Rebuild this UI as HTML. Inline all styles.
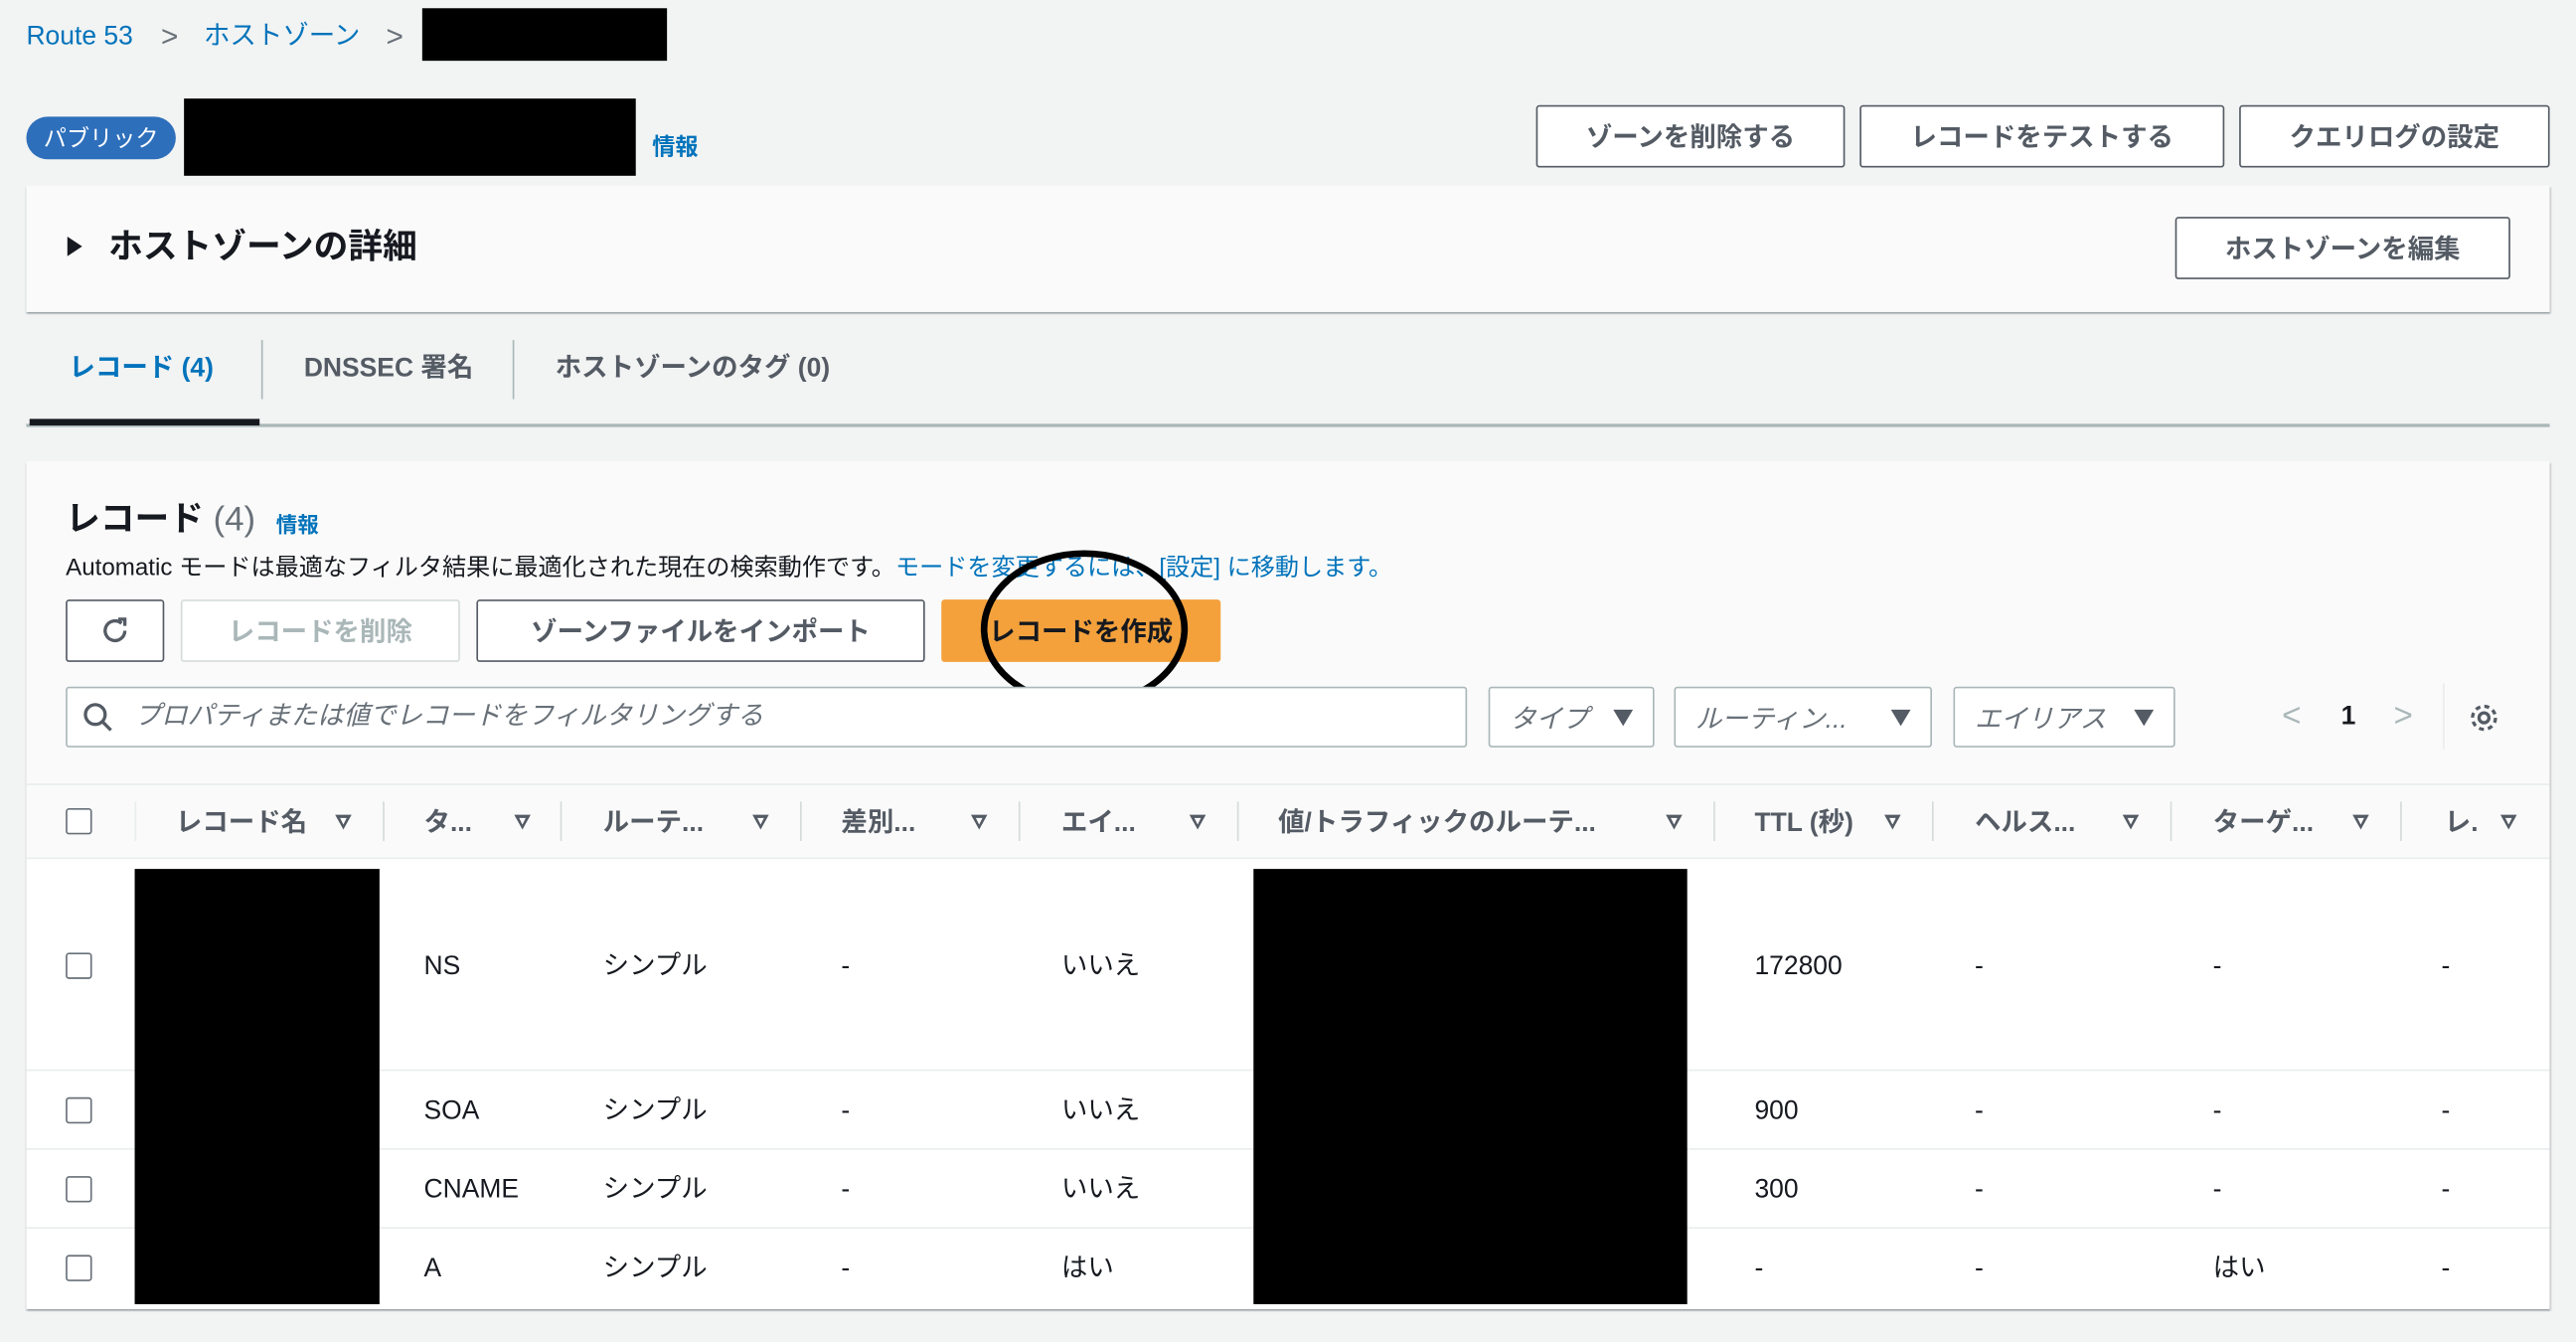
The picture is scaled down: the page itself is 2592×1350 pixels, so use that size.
<!DOCTYPE html>
<html><head><meta charset="utf-8"><style>
html,body{margin:0;padding:0;width:2592px;height:1350px;overflow:hidden;background:#f2f3f3}
#w{position:absolute;left:0;top:0;width:1568px;height:817px;transform:scale(1.65306,1.6524);transform-origin:0 0;font-family:"Liberation Sans","Noto Sans CJK JP",sans-serif;color:#16191f;line-height:24px}
.a{position:absolute;white-space:nowrap}
.blk{position:absolute;background:#000}
.btn{position:absolute;box-sizing:border-box;border:1px solid #545b64;border-radius:2px;background:#fff;color:#545b64;font-weight:bold;font-size:16px;display:flex;align-items:center;justify-content:center;padding-top:3px}
.blue{color:#0073bb}
.sep{position:absolute;width:1px;background:#d5dbdb}
.hd{position:absolute;top:490px;font-size:16px;font-weight:bold;color:#545b64;white-space:nowrap}
.tri{position:absolute;top:496px;width:0;height:0;border-left:5px solid transparent;border-right:5px solid transparent;border-top:9px solid #545b64}
.tri:after{content:"";position:absolute;left:-2px;top:-7px;border-left:2px solid transparent;border-right:2px solid transparent;border-top:4px solid #fff}
.cb{position:absolute;left:40px;width:14px;height:14px;border:1px solid #687078;border-radius:2px;background:#fff}
.c{position:absolute;font-size:16px;white-space:nowrap;line-height:24px}
.rl{position:absolute;left:16px;width:1536px;height:1px;background:#eaeded}
.dd{position:absolute;top:418px;height:37px;box-sizing:border-box;border:1px solid #aab7b8;border-radius:2px;background:#fff;font-style:italic;color:#687078;font-size:16px;padding:2px 12px 0;line-height:35px}
.dd i{position:absolute;right:12px;top:13px;border-left:6px solid transparent;border-right:6px solid transparent;border-top:10px solid #545b64}
</style></head><body><div id="w">
<div class="a blue" style="left:16px;top:11px;font-size:16px">Route 53</div>
<div class="a" style="left:98px;top:10px;font-size:18px;color:#687078">&gt;</div>
<div class="a blue" style="left:124px;top:11px;font-size:16px">ホストゾーン</div>
<div class="a" style="left:235px;top:10px;font-size:18px;color:#687078">&gt;</div>
<div class="blk" style="left:257px;top:5px;width:149px;height:32px"></div>
<div class="a" style="left:16px;top:71px;width:91px;height:26px;border-radius:13px;background:#2e6fbb;color:#fff;font-size:14px;text-align:center;line-height:27px">パブリック</div>
<div class="blk" style="left:112px;top:60px;width:275px;height:47px"></div>
<div class="a blue" style="left:397px;top:77px;font-size:14px;font-weight:bold">情報</div>
<div class="btn" style="left:935px;top:64px;width:188px;height:38px">ゾーンを削除する</div>
<div class="btn" style="left:1132px;top:64px;width:222px;height:38px">レコードをテストする</div>
<div class="btn" style="left:1363px;top:64px;width:189px;height:38px">クエリログの設定</div>
<div class="a" style="left:16px;top:113px;width:1536px;height:77px;background:#fafafa;box-shadow:0 1px 1px rgba(0,28,36,.3),1px 1px 1px rgba(0,28,36,.15)"></div>
<div class="a" style="left:41px;top:144px;border-top:6px solid transparent;border-bottom:6px solid transparent;border-left:9px solid #16191f"></div>
<div class="a" style="left:66px;top:135px;font-size:21px;font-weight:bold;line-height:32px">ホストゾーンの詳細</div>
<div class="btn" style="left:1324px;top:132px;width:204px;height:38px">ホストゾーンを編集</div>
<div class="a blue" style="left:42px;top:213px;font-size:16px;font-weight:bold">レコード (4)</div>
<div class="sep" style="left:159px;top:207px;height:36px;background:#aab7b8"></div>
<div class="a" style="left:185px;top:213px;font-size:16px;font-weight:bold;color:#545b64">DNSSEC 署名</div>
<div class="sep" style="left:312px;top:207px;height:36px;background:#aab7b8"></div>
<div class="a" style="left:338px;top:213px;font-size:16px;font-weight:bold;color:#545b64">ホストゾーンのタグ (0)</div>
<div class="a" style="left:16px;top:258px;width:1536px;height:2px;background:#aab7b8"></div>
<div class="a" style="left:18px;top:255px;width:140px;height:4px;background:#16191f"></div>
<div class="a" style="left:16px;top:281px;width:1536px;height:516px;background:#fff;box-shadow:0 1px 1px rgba(0,28,36,.3),1px 1px 1px rgba(0,28,36,.15)"></div>
<div class="a" style="left:16px;top:281px;width:1536px;height:242px;background:#fafafa"></div>
<div class="a" style="left:40px;top:301px;font-size:21px;font-weight:bold;line-height:32px">レコード <span style="font-weight:normal;color:#687078">(4)</span></div>
<div class="a blue" style="left:168px;top:308px;font-size:13px;font-weight:bold">情報</div>
<div class="a" style="left:40px;top:334px;font-size:14.6px;color:#16191f">Automatic モードは最適なフィルタ結果に最適化された現在の検索動作です。<span class="blue">モードを変更するには、[設定] に移動します。</span></div>
<div class="btn" style="left:40px;top:365px;width:60px;height:38px;padding-top:0"><svg width="22" height="22" viewBox="0 0 22 22"><path d="M17 11a6 6 0 1 1-2-4.5" fill="none" stroke="#545b64" stroke-width="2"/><path d="M13 4h4v4" fill="none" stroke="#545b64" stroke-width="2"/></svg></div>
<div class="btn" style="left:110px;top:365px;width:170px;height:38px;border-color:#d5dbdb;color:#aab7b8">レコードを削除</div>
<div class="btn" style="left:290px;top:365px;width:273px;height:38px">ゾーンファイルをインポート</div>
<div class="btn" style="left:573px;top:365px;width:170px;height:38px;background:#f4a13c;border-color:#f4a13c;color:#16191f">レコードを作成</div>
<svg class="a" style="left:590px;top:330px" width="140" height="106"><ellipse cx="70" cy="53" rx="61" ry="46" fill="none" stroke="#000" stroke-width="4"/></svg>
<div class="a" style="left:40px;top:418px;width:853px;height:37px;box-sizing:border-box;border:1px solid #aab7b8;border-radius:2px;background:#fff"></div>
<svg class="a" style="left:50px;top:427px" width="20" height="20"><circle cx="8" cy="8" r="6" fill="none" stroke="#545b64" stroke-width="2"/><path d="M12.5 12.5l5 5" stroke="#545b64" stroke-width="2"/></svg>
<div class="a" style="left:82px;top:425px;font-size:16px;font-style:italic;color:#687078">プロパティまたは値でレコードをフィルタリングする</div>
<div class="dd" style="left:906px;width:101px">タイプ<i></i></div>
<div class="dd" style="left:1019px;width:157px">ルーティン...<i></i></div>
<div class="dd" style="left:1189px;width:135px">エイリアス<i></i></div>
<div class="a" style="left:1389px;top:424px;font-size:20px;color:#aab7b8">&lt;</div>
<div class="a" style="left:1425px;top:425px;font-size:16px;font-weight:bold">1</div>
<div class="a" style="left:1457px;top:424px;font-size:20px;color:#aab7b8">&gt;</div>
<div class="sep" style="left:1487px;top:416px;height:40px;background:#eaeded"></div>
<svg class="a" style="left:1502px;top:427px" width="20" height="20" viewBox="0 0 20 20"><circle cx="10" cy="10" r="3" fill="none" stroke="#545b64" stroke-width="2"/><circle cx="10" cy="10" r="7" fill="none" stroke="#545b64" stroke-width="2" stroke-dasharray="3 2.5"/></svg>
<div class="rl" style="top:477px"></div>
<div class="rl" style="top:522px;background:#eaeded"></div>
<div class="cb" style="top:492px"></div>
<div class="sep" style="left:82px;top:488px;height:24px;background:#eaeded"></div>
<div class="hd" style="left:107px">レコード名</div><div class="tri" style="left:204px"></div><div class="sep" style="left:233px;top:488px;height:24px"></div>
<div class="hd" style="left:258px">タ...</div><div class="tri" style="left:313px"></div><div class="sep" style="left:341px;top:488px;height:24px"></div>
<div class="hd" style="left:367px">ルーテ...</div><div class="tri" style="left:458px"></div><div class="sep" style="left:487px;top:488px;height:24px"></div>
<div class="hd" style="left:512px">差別...</div><div class="tri" style="left:591px"></div><div class="sep" style="left:620px;top:488px;height:24px"></div>
<div class="hd" style="left:646px">エイ...</div><div class="tri" style="left:724px"></div><div class="sep" style="left:753px;top:488px;height:24px"></div>
<div class="hd" style="left:778px">値/トラフィックのルーテ...</div><div class="tri" style="left:1014px"></div><div class="sep" style="left:1043px;top:488px;height:24px"></div>
<div class="hd" style="left:1068px">TTL (秒)</div><div class="tri" style="left:1147px"></div><div class="sep" style="left:1176px;top:488px;height:24px"></div>
<div class="hd" style="left:1202px">ヘルス...</div><div class="tri" style="left:1292px"></div><div class="sep" style="left:1321px;top:488px;height:24px"></div>
<div class="hd" style="left:1347px">ターゲ...</div><div class="tri" style="left:1432px"></div><div class="sep" style="left:1461px;top:488px;height:24px"></div>
<div class="hd" style="left:1488px">レ.</div><div class="tri" style="left:1522px"></div>
<div class="rl" style="top:651px"></div><div class="rl" style="top:699px"></div><div class="rl" style="top:747px"></div>
<div class="cb" style="top:580px"></div><div class="cb" style="top:668px"></div><div class="cb" style="top:716px"></div><div class="cb" style="top:764px"></div>
<div class="c" style="left:258px;top:577px">NS</div><div class="c" style="left:367px;top:577px">シンプル</div><div class="c" style="left:512px;top:577px">-</div><div class="c" style="left:646px;top:577px">いいえ</div><div class="c" style="left:1068px;top:577px">172800</div><div class="c" style="left:1202px;top:577px">-</div><div class="c" style="left:1347px;top:577px">-</div><div class="c" style="left:1486px;top:577px">-</div>
<div class="c" style="left:258px;top:665px">SOA</div><div class="c" style="left:367px;top:665px">シンプル</div><div class="c" style="left:512px;top:665px">-</div><div class="c" style="left:646px;top:665px">いいえ</div><div class="c" style="left:1068px;top:665px">900</div><div class="c" style="left:1202px;top:665px">-</div><div class="c" style="left:1347px;top:665px">-</div><div class="c" style="left:1486px;top:665px">-</div>
<div class="c" style="left:258px;top:713px">CNAME</div><div class="c" style="left:367px;top:713px">シンプル</div><div class="c" style="left:512px;top:713px">-</div><div class="c" style="left:646px;top:713px">いいえ</div><div class="c" style="left:1068px;top:713px">300</div><div class="c" style="left:1202px;top:713px">-</div><div class="c" style="left:1347px;top:713px">-</div><div class="c" style="left:1486px;top:713px">-</div>
<div class="c" style="left:258px;top:761px">A</div><div class="c" style="left:367px;top:761px">シンプル</div><div class="c" style="left:512px;top:761px">-</div><div class="c" style="left:646px;top:761px">はい</div><div class="c" style="left:1068px;top:761px">-</div><div class="c" style="left:1202px;top:761px">-</div><div class="c" style="left:1347px;top:761px">はい</div><div class="c" style="left:1486px;top:761px">-</div>
<div class="blk" style="left:82px;top:529px;width:149px;height:265px"></div>
<div class="blk" style="left:763px;top:529px;width:264px;height:265px"></div>
</div></body></html>
